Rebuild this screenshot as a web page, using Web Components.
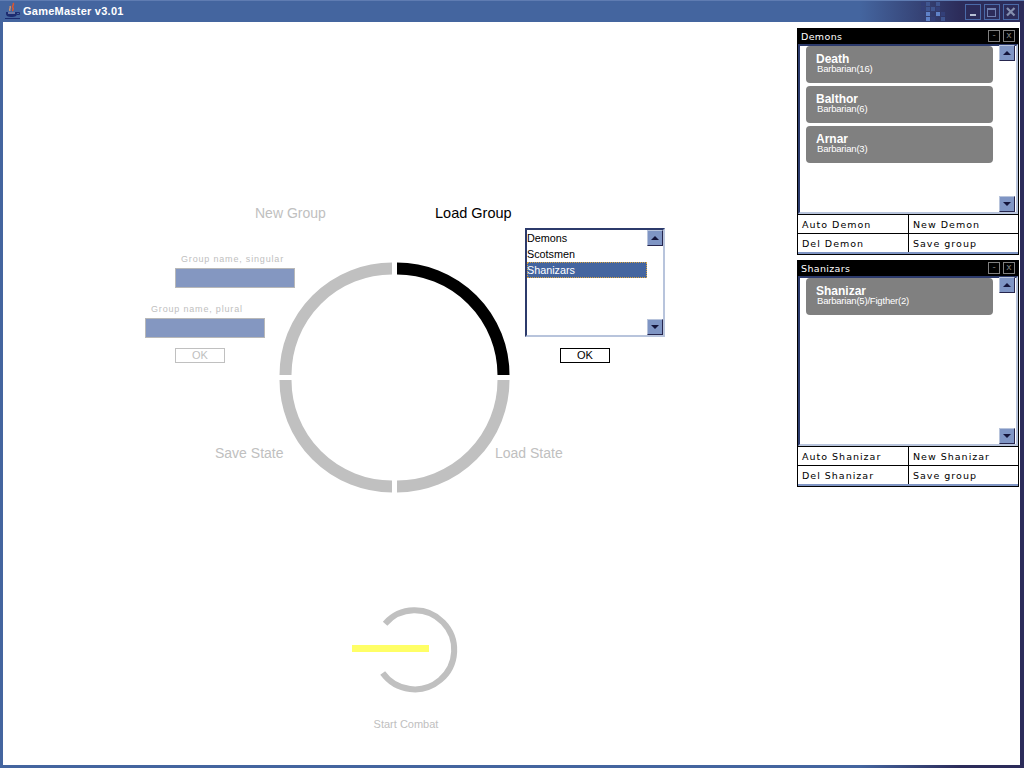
<!DOCTYPE html>
<html>
<head>
<meta charset="utf-8">
<title>GameMaster v3.01</title>
<style>
  html, body { margin: 0; height: 100%; overflow: hidden; background: #fff; }
</style>
</head>
<body>
<game-window>
  <ring-menu></ring-menu>
  <new-group-form></new-group-form>
  <load-group-form></load-group-form>
  <combat-button></combat-button>

  <group-frame style="top:6px" name="Demons" singular="Demon">
    <char-card name="Death" info="Barbarian(16)"></char-card>
    <char-card name="Balthor" info="Barbarian(6)"></char-card>
    <char-card name="Arnar" info="Barbarian(3)"></char-card>
  </group-frame>
  <group-frame style="top:238px" name="Shanizars" singular="Shanizar">
    <char-card name="Shanizar" info="Barbarian(5)/Figther(2)"></char-card>
  </group-frame>
</game-window>

<script>
(function(){

const SANS = `"Liberation Sans", Arial, sans-serif`;
const PIXEL = `"DejaVu Sans", Verdana, sans-serif`;

// little helper so every element is written the same way
function define(tag, html, extra = {})
{
  const template = document.createElement('template');
  template.innerHTML = html;

  customElements.define(tag, class extends HTMLElement {
    constructor()
    {
      super();
      this._shadowRoot = this.attachShadow({mode: 'open'});
      this._shadowRoot.appendChild(template.content.cloneNode(true));
    }

    connectedCallback()
    {
      if(extra.init) extra.init(this, this._shadowRoot);
    }
  });
}

define('scroll-btn', `
<style>
  :host {
    display: flex;
    align-items: center;
    justify-content: center;
    box-sizing: border-box;
    width: 16px;
    height: 16px;
    background: #7f95c4;
    border-style: solid;
    border-width: 1px;
    border-color: #b8c4dc #26264e #26264e #b8c4dc;
  }
  svg { display: block; }
</style>
<svg width="8" height="5" viewBox="0 0 8 5"><polygon fill="#14143a"/></svg>`, {
  init(el, root) {
    root.querySelector('polygon').setAttribute('points',
      el.getAttribute('dir') === 'down' ? '0,0 8,0 4,4' : '4,0 8,4 0,4');
  }
});

define('win-btn', `
<style>
  :host {
    display: block;
    box-sizing: border-box;
    width: 16px;
    height: 16px;
    border: 1px solid #4a6aa8;
  }
  svg { display: block; }
</style>
<svg width="14" height="14" viewBox="0 0 14 14" fill="none"></svg>`, {
  init(el, root) {
    const icons = {
      min: '<rect x="4" y="9" width="6" height="2" fill="#b8c0d4"/>',
      max: '<rect x="2.5" y="3.5" width="8" height="8" stroke="#6f7fb0"/><rect x="2" y="3" width="9" height="2" fill="#6f7fb0"/>',
      close: '<path d="M3 3 L10.5 10.5 M10.5 3 L3 10.5" stroke="#8590b0" stroke-width="2.2"/>'
    };
    root.querySelector('svg').innerHTML = icons[el.getAttribute('kind')];
  }
});

define('title-bar', `
<style>
  :host {
    display: flex;
    align-items: center;
    height: 22px;
    flex: none;
    position: relative;
    color: #fff;
    font: bold 11px ${SANS};
    letter-spacing: .25px;
  }
  .cup { margin-left: 2px; margin-right: 3px; flex: none; }
  .text { flex: 1; }
  .checks { position: absolute; left: 918px; top: 0; }
  .btns { display: flex; gap: 3px; margin-right: 1px; margin-top: 2px; }
</style>
<svg class="cup" width="15" height="18" viewBox="0 0 15 18">
  <path d="M8 1 C10 3 6 4 8 6 C9 7 7 8 8 9" fill="none" stroke="#e0562c" stroke-width="1.6"/>
  <path d="M5 4 C6 6 4 7 5 9" fill="none" stroke="#f0a060" stroke-width="1.2"/>
  <path d="M1 10 H12 V12 C12 14 10 15 7 15 H6 C3 15 1 14 1 12 Z" fill="#1c2c70"/>
  <path d="M12 10.5 H14.5 V12.5 H12" fill="none" stroke="#1c2c70"/>
  <path d="M0 16 H15 V17 H0 Z" fill="#1c2c70"/>
  <path d="M3 10.5 H10 V11.5 H3 Z" fill="#b8c4dc"/>
</svg>
<span class="text">GameMaster v3.01</span>
<svg class="checks" width="25" height="22" viewBox="0 0 25 22" shape-rendering="crispEdges">
  <g fill="#3f5590">
    <rect x="0" y="2" width="4" height="4" fill="#333f78"/><rect x="5" y="2" width="4" height="4"/><rect x="15" y="2" width="4" height="4"/>
    <rect x="0" y="7" width="4" height="4" fill="#333f78"/><rect x="5" y="7" width="4" height="4"/><rect x="10" y="7" width="4" height="4"/><rect x="15" y="7" width="4" height="4" fill="#333f78"/>
    <rect x="5" y="12" width="4" height="4" fill="#5f82c8"/><rect x="15" y="12" width="4" height="4" fill="#5f82c8"/><rect x="20" y="12" width="4" height="4" fill="#333f78"/>
    <rect x="5" y="17" width="4" height="4" fill="#5f82c8"/><rect x="10" y="17" width="4" height="4" fill="#333f78"/><rect x="20" y="17" width="4" height="4"/>
  </g>
</svg>
<div class="btns">
  <win-btn kind="min"></win-btn>
  <win-btn kind="max"></win-btn>
  <win-btn kind="close"></win-btn>
</div>`);

define('game-window', `
<style>
  :host {
    display: flex;
    flex-direction: column;
    box-sizing: border-box;
    width: 1024px;
    height: 768px;
    padding: 0 4px 3px 3px;
    background: linear-gradient(90deg, #44659f 0, #44659f 860px, #2c2c5a 960px, #2c2c5a 100%);
    box-shadow: inset 0 1px 0 #5f7cb2;
  }
  main {
    position: relative;
    flex: 1;
    background: #fff;
    overflow: hidden;
  }
</style>
<title-bar></title-bar>
<main><slot></slot></main>`);

define('char-card', `
<style>
  :host {
    display: block;
    box-sizing: border-box;
    width: 187px;
    height: 37px;
    padding: 6px 0 0 10px;
    background: #808080;
    border-radius: 4px;
    color: #fff;
  }
  .name { font: bold 12px/14px ${SANS}; }
  .info { font: 9.5px/9px ${SANS}; margin: -2px 0 0 1px; letter-spacing: -.2px; }
</style>
<div class="name"></div>
<div class="info"></div>`, {
  init(el, root) {
    root.querySelector('.name').textContent = el.getAttribute('name');
    root.querySelector('.info').textContent = el.getAttribute('info');
  }
});

define('group-frame', `
<style>
  :host {
    position: absolute;
    left: 794px;
    display: flex;
    flex-direction: column;
    box-sizing: border-box;
    width: 222px;
    height: 227px;
    border: 1px solid #000;
    border-top: 0;
    background: #7f95c4;
  }
  .head {
    display: flex;
    align-items: center;
    flex: none;
    height: 16px;
    padding: 0 3px 0 3px;
    background: #000;
    color: #fff;
    font: 9.5px ${PIXEL};
    letter-spacing: .35px;
  }
  .head span { flex: 1; }
  .tb {
    box-sizing: border-box;
    width: 12px;
    height: 12px;
    margin-left: 3px;
    border: 1px solid #808080;
    color: #808080;
    font: 9px/9px ${PIXEL};
    text-align: center;
    letter-spacing: 0;
  }
  .list {
    display: flex;
    flex: 1;
    min-height: 0;
    background: #fff;
    border-style: solid;
    border-width: 2px;
    border-color: #2c3a6b #b8c4dc #b8c4dc #2c3a6b;
  }
  .cards {
    display: flex;
    flex-direction: column;
    flex: 1;
    gap: 3px;
    padding: 0 0 0 6px;
  }
  .bar {
    display: flex;
    flex-direction: column;
    justify-content: space-between;
    width: 16px;
    margin-right: 1px;
    margin-top: -1px;
  }
  .btns {
    display: grid;
    flex: none;
    grid-template-columns: 111px 109px;
    grid-auto-rows: 19px;
    background: #000;
    border-bottom: 2px solid #7f95c4;
  }
  .btn {
    display: flex;
    align-items: center;
    box-sizing: border-box;
    padding-left: 4px;
    background: #fff;
    border-top: 1px solid #000;
    color: #000;
    font: 9.5px ${PIXEL};
    letter-spacing: 1px;
  }
  .btn:nth-child(odd) { border-right: 1px solid #000; }
</style>
<div class="head"><span class="title"></span><div class="tb">-</div><div class="tb">x</div></div>
<div class="list">
  <div class="cards"><slot></slot></div>
  <div class="bar"><scroll-btn dir="up"></scroll-btn><scroll-btn dir="down"></scroll-btn></div>
</div>
<div class="btns">
  <div class="btn auto"></div>
  <div class="btn new"></div>
  <div class="btn del"></div>
  <div class="btn">Save group</div>
</div>`, {
  init(el, root) {
    const s = el.getAttribute('singular');
    root.querySelector('.title').textContent = el.getAttribute('name');
    root.querySelector('.auto').textContent = 'Auto ' + s;
    root.querySelector('.new').textContent = 'New ' + s;
    root.querySelector('.del').textContent = 'Del ' + s;
  }
});

define('ring-menu', `
<style>
  :host {
    position: absolute;
    left: 0;
    top: 0;
    width: 700px;
    height: 500px;
    color: #c0c0c0;
    font: 14px ${SANS};
  }
  svg { position: absolute; left: 267px; top: 228px; }
  span { position: absolute; line-height: 18px; white-space: nowrap; }
</style>
<svg width="250" height="250" viewBox="270 250 250 250" fill="none" stroke="#c0c0c0" stroke-width="12">
  <path d="M392 268.5 A106.5 106.5 0 0 0 285.5 375"/>
  <path d="M285.5 380 A106.5 106.5 0 0 0 392 486.5"/>
  <path d="M503.5 380 A106.5 106.5 0 0 1 397 486.5"/>
  <path d="M397 268.5 A106.5 106.5 0 0 1 503.5 375" stroke="#000"/>
</svg>
<span style="left:252px;top:182px">New Group</span>
<span style="left:432px;top:182px;color:#000;font-size:14.5px">Load Group</span>
<span style="left:212px;top:422px">Save State</span>
<span style="left:492px;top:422px">Load State</span>`);

define('form-ok', `
<style>
  :host {
    display: block;
    box-sizing: border-box;
    width: 50px;
    height: 15px;
    border: 1px solid currentColor;
    font: 11px/13px ${SANS};
    text-align: center;
  }
</style>
OK`);

define('name-field', `
<style>
  :host { display: block; width: 120px; }
  .label {
    height: 16px;
    font: 9px/14px ${SANS};
    letter-spacing: .82px;
    white-space: nowrap;
  }
  .input {
    box-sizing: border-box;
    height: 20px;
    background: #8497c1;
    border: 1px solid #b8b8b8;
  }
</style>
<div class="label"></div>
<div class="input"></div>`, {
  init(el, root) {
    const label = root.querySelector('.label');
    label.textContent = el.getAttribute('label');
    label.style.marginLeft = el.getAttribute('indent') + 'px';
  }
});

define('new-group-form', `
<style>
  :host {
    position: absolute;
    left: 142px;
    top: 230px;
    display: flex;
    flex-direction: column;
    width: 150px;
    color: #c0c0c0;
  }
  .sing { margin-left: 30px; margin-bottom: 14px; }
  form-ok { margin: 10px 0 0 30px; }
</style>
<name-field class="sing" label="Group name, singular" indent="6"></name-field>
<name-field label="Group name, plural" indent="6"></name-field>
<form-ok></form-ok>`);

define('load-group-form', `
<style>
  :host {
    position: absolute;
    left: 522px;
    top: 206px;
    display: flex;
    flex-direction: column;
    width: 140px;
    color: #000;
  }
  .list {
    display: flex;
    box-sizing: border-box;
    height: 109px;
    border-style: solid;
    border-width: 2px;
    border-color: #2c3a6b #b8c4dc #b8c4dc #2c3a6b;
    font: 10.8px/16px ${SANS};
  }
  .items { width: 120px; }
  .item { box-sizing: border-box; height: 16px; }
  .sel {
    background: #44659f;
    color: #fff;
    border: 1px dotted #d9a441;
    line-height: 14px;
    text-indent: -1px;
  }
  .bar {
    display: flex;
    flex-direction: column;
    justify-content: space-between;
    width: 16px;
  }
  form-ok { margin: 11px 0 0 35px; }
</style>
<div class="list">
  <div class="items">
    <div class="item">Demons</div>
    <div class="item">Scotsmen</div>
    <div class="item sel">Shanizars</div>
  </div>
  <div class="bar"><scroll-btn dir="up"></scroll-btn><scroll-btn dir="down"></scroll-btn></div>
</div>
<form-ok></form-ok>`);

define('combat-button', `
<style>
  :host {
    position: absolute;
    left: 337px;
    top: 568px;
    display: block;
    width: 132px;
    height: 150px;
  }
  svg { display: block; }
  span {
    position: absolute;
    left: 0;
    width: 132px;
    top: 126px;
    color: #c0c0c0;
    font: 11px/16px ${SANS};
    text-align: center;
  }
</style>
<svg width="130" height="110" viewBox="340 590 130 110">
  <path d="M385.1 623.7 A39.5 39.5 0 1 1 382.7 673" fill="none" stroke="#c0c0c0" stroke-width="6"/>
  <rect x="352" y="645" width="77" height="7" fill="#ffff66"/>
</svg>
<span>Start Combat</span>`);

})();
</script>
</body>
</html>
